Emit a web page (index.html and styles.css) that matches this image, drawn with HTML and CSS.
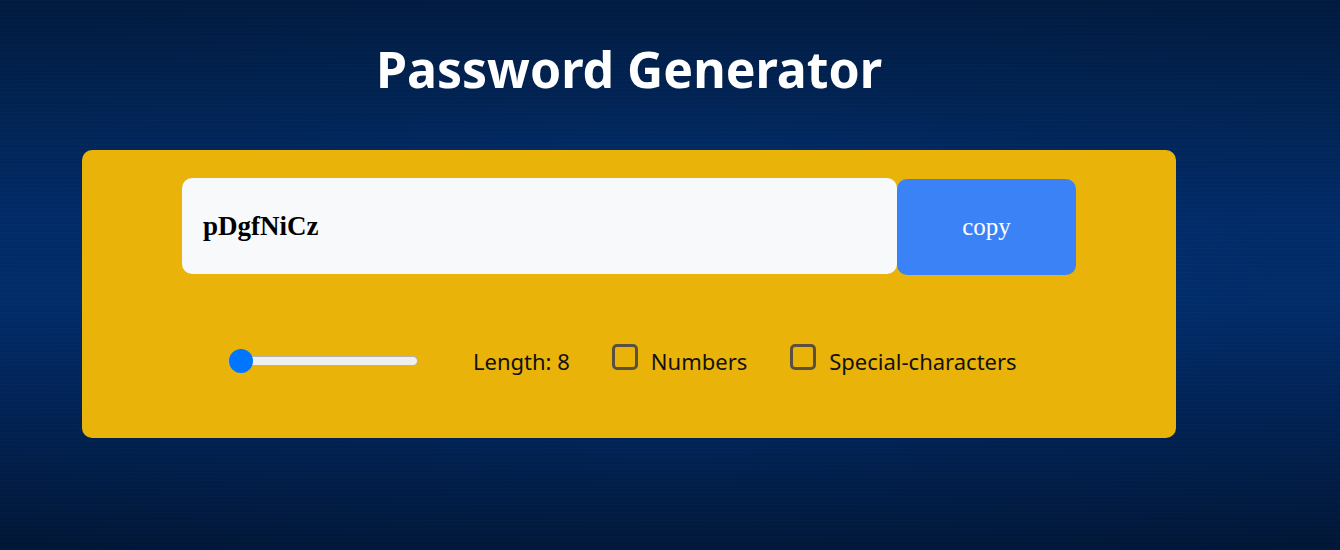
FILE: index.html
```html
<!DOCTYPE html>
<html lang="en">
<head>
<meta charset="utf-8">
<title>Password Generator</title>
<link rel="stylesheet" href="styles.css">
</head>
<body>
<main class="page">
  <h1 class="title">Password Generator</h1>
  <section class="card">
    <div class="output-row">
      <input class="password" type="text" value="pDgfNiCz" readonly>
      <button class="copy-btn">copy</button>
    </div>
    <div class="controls">
      <input class="range" type="range" min="8" max="100" value="8">
      <label class="length">Length: 8</label>
      <label class="option"><input class="check" type="checkbox"><span>Numbers</span></label>
      <label class="option"><input class="check" type="checkbox"><span>Special-characters</span></label>
    </div>
  </section>
</main>
</body>
</html>
```
FILE: styles.css
```css
html, body {
  margin: 0;
  height: 100%;
}
body {
  font-family: "Noto Sans", "Open Sans", sans-serif;
  background:
    repeating-linear-gradient(180deg, rgba(255,255,255,0.012) 0px, rgba(255,255,255,0.012) 1px, rgba(0,0,0,0.02) 2px, rgba(0,0,0,0) 4px),
    radial-gradient(ellipse 75% 60% at 50% 52%, rgba(0,60,140,0.55) 0%, rgba(0,40,100,0.2) 60%, rgba(0,0,0,0) 100%),
    linear-gradient(180deg, #001a3f 0%, #00224f 18%, #002c69 40%, #002d6a 55%, #00204e 78%, #001636 100%);
  overflow: hidden;
}
.page {
  width: 1094px;
  padding: 34px 0 0 82px;
}
.title {
  margin: 0;
  text-align: center;
  color: #ffffff;
  font-family: "Noto Sans", "Open Sans", sans-serif;
  font-weight: 700;
  font-size: 50px;
  line-height: 70px;
}
.card {
  margin-top: 46px;
  height: 288px;
  box-sizing: border-box;
  background: #e9b30a;
  border-radius: 10px;
  padding-top: 28px;
}
.output-row {
  display: flex;
  justify-content: center;
  align-items: flex-start;
}
.password {
  width: 715px;
  height: 96px;
  box-sizing: border-box;
  border: none;
  outline: none;
  border-radius: 10px;
  background: #f8f9fa;
  padding: 0 0 0 21px;
  font-family: "Liberation Serif", serif;
  font-weight: 700;
  font-size: 27px;
  color: #000;
}
.copy-btn {
  width: 179px;
  height: 96px;
  margin-top: 1px;
  border: none;
  border-radius: 10px;
  background: #3b82f6;
  color: #fff;
  font-family: "Liberation Serif", serif;
  font-size: 25px;
}
.controls {
  display: flex;
  align-items: center;
  justify-content: flex-start;
  margin-top: 69px;
  padding-left: 146px;
  color: #111;
  font-size: 22px;
}
.range {
  -webkit-appearance: none;
  appearance: none;
  width: 190px;
  height: 10px;
  margin: 0 55px 0 0;
  background: #efefef;
  border: 1px solid #b2b2b2;
  border-radius: 6px;
  box-sizing: border-box;
}
.range::-webkit-slider-thumb {
  -webkit-appearance: none;
  appearance: none;
  width: 24px;
  height: 24px;
  border-radius: 50%;
  background: #0075ff;
  border: none;
}
.length {
  margin-right: 42px;
}
.option {
  display: flex;
  align-items: center;
  margin-right: 43px;
}
.option:last-child {
  margin-right: 0;
}
.check {
  -webkit-appearance: none;
  appearance: none;
  width: 26px;
  height: 26px;
  margin: 0 13px 7px 0;
  box-sizing: border-box;
  border: 3px solid #5a5040;
  border-radius: 5px;
  background: transparent;
}
```
